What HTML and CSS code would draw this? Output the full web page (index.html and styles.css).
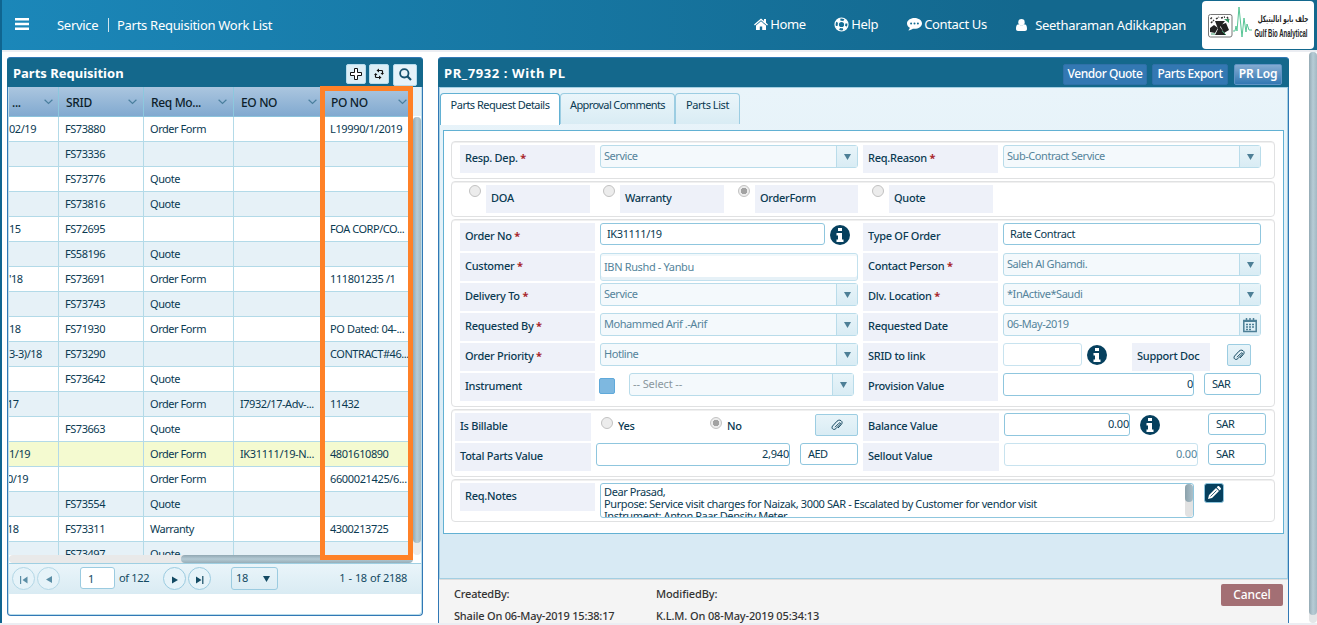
FILE: index.html
```
<!DOCTYPE html>
<html lang="en">
<head>
<meta charset="utf-8">
<title>Parts Requisition Work List</title>
<link rel="stylesheet" href="styles.css">
</head>
<body>
<svg class="defs" width="0" height="0">
  <symbol id="info" viewBox="0 0 20 20"><circle cx="10" cy="10" r="10" fill="#06405e"/><path d="M8 3h4v3H8zM6.500 8H12v6.500h1.500V17h-7v-2.500H8v-4H6.500z" fill="#fff"/></symbol>
  <symbol id="clip" viewBox="0 0 14 12"><path d="M5 8.200 9 4.200c1-1 2 .1 1.200 1L5.800 9.700C3.600 11.600.8 9.400 2.600 7L7 2.200C9.700-.5 13.700 2.500 11.400 5.400L8 9" fill="none" stroke="#0c3f57" stroke-width=".95"/></symbol>
  <symbol id="tri" viewBox="0 0 7 6"><path d="M0 0h7L3.500 6z" fill="currentColor"/></symbol>
  <symbol id="chev" viewBox="0 0 9 6"><path d="M.6.800 4.500 4.400 8.400.8" fill="none" stroke="#4a7f9e" stroke-width="1.200"/></symbol>
</svg>

<header class="topbar">
  <svg class="burger" viewBox="0 0 14 12"><path d="M0 0h14v2.600H0zM0 4.700h14v2.600H0zM0 9.400h14V12H0z" fill="#fff"/></svg>
  <nav class="crumbs"><span class="crumb-root">Service</span><span class="crumb-sep"></span><span>Parts Requisition Work List</span></nav>
  <nav class="links">
    <a class="l-home"><svg width="14" height="12" viewBox="0 0 14 12"><path d="M7 .5 0 6.500l.9.900L7 2.300l6.100 5.100.9-.9-2-1.700V1h-2v2z" fill="#fff"/><path d="M7 3.300 2 7.500V12h3.800V8.500h2.400V12H12V7.500z" fill="#fff"/></svg>Home</a>
    <a class="l-help"><svg width="15" height="15" viewBox="0 0 15 15"><circle cx="7.500" cy="7.500" r="6.500" fill="none" stroke="#fff" stroke-width="1.200"/><circle cx="7.500" cy="7.500" r="3.200" fill="none" stroke="#fff" stroke-width="1.200"/><circle cx="7.500" cy="7.500" r="4.800" fill="none" stroke="#fff" stroke-width="3" stroke-dasharray="4 3.540" stroke-dashoffset="-1.800"/></svg>Help</a>
    <a class="l-contact"><svg width="15" height="13" viewBox="0 0 15 13"><path d="M7.500 0C3.400 0 0 2.400 0 5.500c0 1.800 1.100 3.300 2.800 4.300-.2 1.200-.9 2-1.400 2.600 1.900-.1 3.500-.9 4.500-1.700l1.600.1c4.100 0 7.500-2.400 7.500-5.400S11.600 0 7.500 0zM4.100 6.500a1 1 0 1 1 0-2 1 1 0 0 1 0 2zm3.400 0a1 1 0 1 1 0-2 1 1 0 0 1 0 2zm3.400 0a1 1 0 1 1 0-2 1 1 0 0 1 0 2z" fill="#fff"/></svg>Contact Us</a>
    <a class="l-user"><svg width="11" height="12" viewBox="0 0 11 12"><circle cx="5.500" cy="3.200" r="3.200" fill="#fff"/><path d="M2.300 5.200C.5 5.500 0 7.500 0 10c0 1.300.8 2 2 2h7c1.200 0 2-.7 2-2 0-2.500-.5-4.500-2.300-4.800-1.600 1.500-4.800 1.500-6.400 0z" fill="#fff"/></svg>Seetharaman Adikkappan</a>
  </nav>
  <div class="logo">
    <svg class="logo-art" viewBox="0 0 50 36"><rect x="6.500" y="9.500" width="23.500" height="22.500" rx="2" fill="#fff" stroke="#777"/><path d="M13 16h10l-5 6 6 8H13l3-6z" fill="#222"/><path d="M8 23l4-3 4 3-3 5-5-1zM18 20l6-2 3 7-5 3z" fill="#222"/><path d="M9 18l3-3M14 14l3-2M19 13l4-1M8.500 14l2-2M25 12l2 3" stroke="#333" stroke-width="1.500" stroke-dasharray="2 1" fill="none"/><path d="M22 14h5v4z" fill="#3c9a68"/><path d="M9 29h4M20 26l4 4" stroke="#3c9a68"/><path d="M31 26h2l1-5 1 5 2-24 3 30 2-19 2 14 1-8 2 6h4" fill="none" stroke="#57c595" stroke-width="1"/></svg>
    <div class="logo-text"><span class="ar" dir="rtl">جلف بايو اناليتيكل</span><span class="en">Gulf Bio Analytical</span></div>
  </div>
</header>

<main class="main">
  <section class="list">
    <div class="bar">
      <h2>Parts Requisition</h2>
      <div class="tools">
        <button class="sq"><svg width="12" height="12" viewBox="0 0 12 12"><path d="M4.500.5h3v4h4v3h-4v4h-3v-4h-4v-3h4z" fill="#fff" stroke="#111"/></svg></button>
        <button class="sq"><svg width="10" height="12" viewBox="0 0 10 12"><path d="M8.500 5.500V3.300C8.500 2.700 8 2.500 7.500 2.500H4M1.500 6.500v2.200c0 .6.500.8 1 .8H6" fill="none" stroke="#111" stroke-width="1.200"/><path d="M5 .5v4L2.500 2.500zM5 7.500v4l2.500-2z" fill="#111"/><path d="M6.500 5h3.500L8.300 7zM0 7h3.500L1.700 5z" fill="#111"/></svg></button>
        <button class="sq big"><svg width="13" height="13" viewBox="0 0 13 13"><circle cx="5.300" cy="5.300" r="4.200" fill="none" stroke="#14506e" stroke-width="1.800"/><path d="M8.300 8.300 12 12" stroke="#14506e" stroke-width="2.200"/></svg></button>
      </div>
    </div>
    <div class="grid">
      <div class="scroller">
        <table>
          <colgroup><col class="c1"><col class="c2"><col class="c3"><col class="c4"><col class="c5"></colgroup>
          <thead><tr>
            <th><span>...</span><svg><use href="#chev"/></svg></th>
            <th><span>SRID</span><svg><use href="#chev"/></svg></th>
            <th><span>Req Mo...</span><svg><use href="#chev"/></svg></th>
            <th><span>EO NO</span><svg><use href="#chev"/></svg></th>
            <th><span>PO NO</span><svg><use href="#chev"/></svg></th>
          </tr></thead>
          <tbody>
            <tr><td>02/19</td><td>FS73880</td><td>Order Form</td><td></td><td class="wide">L19990/1/2019</td></tr>
            <tr><td></td><td>FS73336</td><td></td><td></td><td></td></tr>
            <tr><td></td><td>FS73776</td><td>Quote</td><td></td><td></td></tr>
            <tr><td></td><td>FS73816</td><td>Quote</td><td></td><td></td></tr>
            <tr><td>15</td><td>FS72695</td><td></td><td></td><td>FOA CORP/CO...</td></tr>
            <tr><td></td><td>FS58196</td><td>Quote</td><td></td><td></td></tr>
            <tr><td>'18</td><td>FS73691</td><td>Order Form</td><td></td><td class="wide">111801235 /1</td></tr>
            <tr><td></td><td>FS73743</td><td>Quote</td><td></td><td></td></tr>
            <tr><td>18</td><td>FS71930</td><td>Order Form</td><td></td><td class="wide">PO Dated: 04-...</td></tr>
            <tr><td>3-3)/18</td><td>FS73290</td><td></td><td></td><td>CONTRACT#46...</td></tr>
            <tr><td></td><td>FS73642</td><td>Quote</td><td></td><td></td></tr>
            <tr><td class="cut">17</td><td></td><td>Order Form</td><td>I7932/17-Adv-...</td><td>11432</td></tr>
            <tr><td></td><td>FS73663</td><td>Quote</td><td></td><td></td></tr>
            <tr class="selected"><td>1/19</td><td></td><td>Order Form</td><td class="wide">IK31111/19-N...</td><td>4801610890</td></tr>
            <tr><td class="cut">0/19</td><td></td><td>Order Form</td><td></td><td class="wide">6600021425/6...</td></tr>
            <tr><td></td><td>FS73554</td><td>Quote</td><td></td><td></td></tr>
            <tr><td class="cut">18</td><td>FS73311</td><td>Warranty</td><td></td><td>4300213725</td></tr>
            <tr><td></td><td>FS73497</td><td>Quote</td><td></td><td></td></tr>
          </tbody>
        </table>
      </div>
      <div class="vtrack"><div class="vthumb"></div></div>
    </div>
    <div class="htrack"><div class="hthumb"></div></div>
    <div class="pager">
      <button class="round dim"><svg width="8" height="8" viewBox="0 0 8 8"><path d="M0 0h1.200v8H0zM7.500.5v7L2.500 4z" fill="currentColor"/></svg></button>
      <button class="round dim"><svg width="6" height="7" viewBox="0 0 6 7"><path d="M6 0v7L0 3.500z" fill="currentColor"/></svg></button>
      <div class="page-no">1</div>
      <span class="of">of 122</span>
      <button class="round"><svg width="6" height="8" viewBox="0 0 6 8"><path d="M0 .5v7L6 4z" fill="currentColor"/></svg></button>
      <button class="round"><svg width="8" height="8" viewBox="0 0 8 8"><path d="M0 .5v7L5.500 4zM6.200 0h1.200v8H6.200z" fill="currentColor"/></svg></button>
      <div class="size">18<svg><use href="#tri"/></svg></div>
      <span class="range">1 - 18 of 2188</span>
    </div>
    <div class="highlight"></div>
  </section>

  <section class="detail">
    <div class="bar">
      <h2 class="pr">PR_7932 : With PL</h2>
      <div class="actions"><button class="w84">Vendor Quote</button><button class="w76">Parts Export</button><button class="w48 log">PR Log</button></div>
    </div>
    <div class="pane">
      <div class="tabs"><div class="tab t1 active">Parts Request Details</div><div class="tab t2">Approval Comments</div><div class="tab t3">Parts List</div></div>
      <div class="form">
        <div class="group g1">
          <label>Resp. Dep. <i>*</i></label><div class="combo">Service<b><svg><use href="#tri"/></svg></b></div>
          <label>Req.Reason <i>*</i></label><div class="combo">Sub-Contract Service<b><svg><use href="#tri"/></svg></b></div>
        </div>
        <div class="group g2">
          <span class="radio"></span><label>DOA</label>
          <span class="radio"></span><label>Warranty</label>
          <span class="radio on"></span><label class="short">OrderForm</label>
          <span class="radio"></span><label>Quote</label>
        </div>
        <div class="group g3">
          <label>Order No <i>*</i></label><div class="ctl"><div class="input w225">IK31111/19</div><svg class="info"><use href="#info"/></svg></div>
          <label>Type OF Order</label><div class="ctl"><div class="input full">Rate Contract</div></div>
          <label>Customer <i>*</i></label><div class="customer">IBN Rushd - Yanbu</div>
          <label>Contact Person <i>*</i></label><div class="combo">Saleh Al Ghamdi.<b><svg><use href="#tri"/></svg></b></div>
          <label>Delivery To <i>*</i></label><div class="combo">Service<b><svg><use href="#tri"/></svg></b></div>
          <label>Dlv. Location <i>*</i></label><div class="combo">*InActive*Saudi<b><svg><use href="#tri"/></svg></b></div>
          <label>Requested By <i>*</i></label><div class="combo">Mohammed Arif .-Arif<b><svg><use href="#tri"/></svg></b></div>
          <label>Requested Date</label><div class="combo">06-May-2019<b><svg class="cal" viewBox="0 0 14 15"><path d="M.8 2.500h12.400v11H.8z" fill="none" stroke="#4d7f96" stroke-width="1.500"/><path d="M.5 2h13v2H.5z" fill="#4d7f96"/><path d="M3.500 0v3M7 0v3M10.500 0v3" stroke="#4d7f96" stroke-width="1.500"/><path d="M3 6.500h8.500M3 9h8.500M3 11.500h5.500" stroke="#4d7f96" stroke-width="1.500" stroke-dasharray="2 1"/></svg></b></div>
          <label>Order Priority <i>*</i></label><div class="combo">Hotline<b><svg><use href="#tri"/></svg></b></div>
          <label>SRID to link</label><div class="ctl"><div class="input w79 off"></div><svg class="info"><use href="#info"/></svg><label class="doc">Support Doc</label><button class="clip w24"><svg><use href="#clip"/></svg></button></div>
          <label>Instrument</label><div class="ctl"><span class="check"></span><div class="combo w225 hint">-- Select --<b><svg><use href="#tri"/></svg></b></div></div>
          <label>Provision Value</label><div class="ctl"><div class="input num w191">0</div><div class="input cur w57">SAR</div></div>
        </div>
        <div class="group g4">
          <label>Is Billable</label><div class="ctl"><span class="radio"></span><span class="opt yes">Yes</span><span class="radio on"></span><span class="opt no">No</span><button class="clip w43"><svg><use href="#clip"/></svg></button></div>
          <label>Balance Value</label><div class="ctl"><div class="input num w126">0.00</div><svg class="info"><use href="#info"/></svg><div class="input cur w58">SAR</div></div>
          <label>Total Parts Value</label><div class="ctl"><div class="input num w194">2,940</div><div class="input cur w58">AED</div></div>
          <label>Sellout Value</label><div class="ctl"><div class="input num w194 off">0.00</div><div class="input cur w58">SAR</div></div>
        </div>
        <div class="group g5">
          <label>Req.Notes</label>
          <div class="notes"><div class="notes-text">Dear Prasad,<br>Purpose: Service visit charges for Naizak, 3000 SAR - Escalated by Customer for vendor visit<br>Instrument: Anton Paar Density Meter</div><div class="notes-track"><div class="notes-thumb"></div></div></div>
          <button class="edit"><svg width="14" height="14" viewBox="0 0 14 14"><path d="M1 13l1-4 7-7 3 3-7 7zM9.700 1.300l1-1c.5-.4 1-.3 1.400 0L13.700 2c.4.500.4 1 0 1.400l-1 1z" fill="#fff"/><path d="M3.500 10.500 9.500 4.500" stroke="#06405e" stroke-width=".8"/></svg></button>
        </div>
      </div>
    </div>
    <footer class="foot">
      <div class="who a"><span>CreatedBy:</span><span>Shaile On 06-May-2019 15:38:17</span></div>
      <div class="who b"><span>ModifiedBy:</span><span>K.L.M. On 08-May-2019 05:34:13</span></div>
      <button class="cancel">Cancel</button>
    </footer>
  </section>
  <div class="pagetrack"><div class="pagethumb"></div></div>
</main>
</body>
</html>
```
FILE: styles.css
```
* { box-sizing: border-box; }
body { margin: 0; width: 1317px; height: 625px; overflow: hidden; background: #fff; border-bottom: 2px solid #eceef3; font: 11px/14px "Noto Sans", sans-serif; letter-spacing: -.45px; color: #0a3a52; position: relative; }
body::before { content: ""; position: absolute; left: 0; top: 0; width: 2px; height: 625px; background: #0f6590; }
.defs { position: absolute; }
button { font: inherit; letter-spacing: inherit; color: inherit; padding: 0; margin: 0; border: 0; display: flex; align-items: center; justify-content: center; }
h2 { margin: 0; font-size: 13px; font-weight: 700; color: #fff; letter-spacing: 0; line-height: 18px; margin-top: -2px; }
h2.pr { letter-spacing: .6px; }

.topbar { height: 52px; margin-left: 2px; display: flex; align-items: center; background: linear-gradient(90deg, #1b87b9, #13688e 78%); border-bottom: 2px solid #ebedf2; color: #fff; font-size: 13px; letter-spacing: -.29px; }
.burger { width: 14px; height: 12px; margin: 0 0 2px 13px; }
.crumbs { display: flex; margin-left: 28px; line-height: 18px; }
.crumb-root { width: 51px; }
.crumb-sep { width: 1px; height: 14px; background: #cfe4ee; margin: 2px 8px 0 0; }
.links { display: flex; flex: 1; align-items: center; height: 18px; margin-top: -2px; }
.links a { display: flex; align-items: center; gap: 3px; white-space: nowrap; }
.l-home { margin-left: 482px; width: 80px; }
.links .l-home, .links .l-help, .links .l-contact { gap: 2px; letter-spacing: -.35px; }
.l-home svg, .l-help svg, .l-contact svg { flex: none; }
.l-help { width: 73px; }
.l-contact { width: 109px; }
.links .l-user { gap: 8px; padding-top: 2px; }
.logo { width: 112px; height: 48px; margin-right: 3px; background: #fff; border-radius: 4px; display: flex; align-items: center; }
.logo-art { width: 50px; height: 36px; margin-top: -4px; flex: none; }
.logo-text { display: flex; flex-direction: column; color: #222; align-items: flex-end; width: 56px; white-space: nowrap; padding-top: 2px; }
.ar { font: bold 9px/15px "DejaVu Sans", sans-serif; letter-spacing: 0; transform: scaleX(.63); transform-origin: right; }
.en { font: bold 10px/14px "Liberation Sans", sans-serif; letter-spacing: 0; transform: scaleX(.6); transform-origin: right; }

.main { display: flex; height: 571px; }
.bar { height: 30px; background: #14688c; display: flex; align-items: center; justify-content: space-between; }
.list { position: relative; width: 416px; height: 559px; margin: 5px 0 0 7px; border: 1px solid #3178b5; border-top: 0; border-radius: 4px; flex: none; box-shadow: inset -1px -1px #b9dcea, inset 1px 0 #b9dcea; }
.list .bar { margin: 0 -1px; border-radius: 4px 4px 0 0; border-top: 1px solid #3178b5; padding: 3px 6px 0 6px; }
.tools { display: flex; gap: 3px; align-items: center; }
.sq { width: 20px; height: 20px; background: #dceef6; border: 1px solid #b6dced; border-radius: 2px; }
.sq.big { width: 24px; height: 22px; margin-left: 1px; margin-top: 1px; background: #e6f2f9; }
.grid { display: flex; height: 468px; margin: 0 1px; background: linear-gradient(#e4f1f8 29px, #fff 29px); }
.scroller { width: 404px; height: 468px; overflow: hidden; flex: none; }
table { width: 404px; table-layout: fixed; border-collapse: separate; border-spacing: 0; }
.c1 { width: 50px; } .c2 { width: 85px; } .c3 { width: 90px; } .c4 { width: 90px; } .c5 { width: 89px; }
th { height: 30px; padding: 3px 0 0 7px; text-align: left; font-size: 12px; font-weight: 500; color: #0d1e2b; letter-spacing: -.35px; background: linear-gradient(#abc6df, #81a9d0); border-right: 1px solid #8cc8de; border-bottom: 1px solid #8cc3dc; white-space: nowrap; overflow: hidden; }
th:first-child { padding-left: 3px; }
th span { display: inline-block; width: 67px; vertical-align: middle; }
th:first-child span { width: 32px; }
th:nth-child(2) span { width: 62px; }
th svg { width: 9px; height: 6px; vertical-align: middle; margin-bottom: 2px; }
td { height: 25px; padding: 0 0 0 6px; border-right: 1px solid #b3dae8; border-bottom: 1px solid #b3dae8; white-space: nowrap; background: #fff; }
td:first-child { padding-left: 0; overflow: hidden; }
td.cut { text-indent: -2px; }
tr:nth-child(even) td { background: #e6f1f7; }
tr.selected td, tr.selected:nth-child(even) td { background: #f4fad0; }
td.wide { letter-spacing: -.36px; }
.vtrack { width: 8px; margin-top: 30px; height: 438px; border-radius: 4px; background: #ececec; }
.vthumb { height: 426px; border-radius: 4px; background: linear-gradient(90deg, #94aab4, #b7ccd6 50%, #a3b9c3); }
.htrack { height: 8px; margin: 0 10px 0 1px; border-radius: 4px; background: #e9e9e9; padding-left: 172px; }
.hthumb { height: 8px; width: 232px; border-radius: 4px; background: linear-gradient(#91a8b3, #b4cad4 50%, #98aeb8); }
.pager { height: 31px; margin: 0 1px; border-top: 1px solid #9fcfe2; background: linear-gradient(#eaf5fa, #d9ebf3); display: flex; align-items: center; color: #134a63; letter-spacing: -.2px; }
.pager > * { position: relative; top: -1px; }
.round { width: 23px; height: 23px; border: 1px solid #9bcbe0; border-radius: 50%; margin-left: 2px; color: #134a63; background: #e6f3f9; padding-top: 3px; flex: none; }
.round:first-child { margin-left: 3px; }
.round.dim { color: #5b8ea6; border-color: #b3d7e6; }
.page-no { width: 35px; height: 22px; margin-left: 20px; background: #fff; border: 1px solid #9bcbe0; border-radius: 3px; padding: 4px 7px; }
.of { width: 42px; margin-left: 4px; margin-top: -1px; letter-spacing: -.35px; white-space: nowrap; }
.size { width: 47px; height: 23px; margin-left: 20px; border: 1px solid #9bcbe0; border-radius: 3px; padding: 0 7px 1px 4px; display: flex; align-items: center; justify-content: space-between; }
.size svg { width: 7px; height: 6px; margin-top: 3px; }
.range { margin: -1px 14px 0 auto; letter-spacing: -.3px; word-spacing: .6px; }
.highlight { position: absolute; left: 312px; top: 29px; width: 93px; height: 474px; border: 5px solid #ff8127; }

.detail { width: 851px; height: 566px; margin: 5px 0 0 15px; border: 1px solid #3178b5; border-bottom: 0; border-top: 0; border-radius: 4px 4px 0 0; flex: none; }
.detail .bar { margin: 0 -1px; border-radius: 4px 4px 0 0; border-top: 1px solid #3178b5; padding: 3px 7px 0 6px; }
.actions { display: flex; gap: 5px; }
.actions button { height: 21px; background: #3378b3; border: 1px solid #2f70a8; border-radius: 2px; color: #fff; font-size: 12px; font-weight: 500; letter-spacing: -.45px; white-space: nowrap; }
.w84 { width: 84px; } .w76 { width: 76px; } .w48 { width: 48px; }
.actions .log { background: linear-gradient(#84abd1, #3378b3); margin-left: 1px; border-color: #5f93c4; font-weight: 600; letter-spacing: -.2px; }
.pane { height: 492px; padding: 5px 3px 0 4px; background: linear-gradient(#e9f4fa, #d8eaf4 90%); border: 1px solid #a3cfe2; }
.tabs { display: flex; height: 37px; margin-left: -4px; }
.tab { height: 31px; border: 1px solid #9ccde2; border-bottom: 0; border-radius: 4px 4px 0 0; background: linear-gradient(#eaf5fa, #d9ecf4); padding-top: 4px; text-align: center; white-space: nowrap; }
.tab.active { background: #fff; border-color: #62b1d3; height: 32px; letter-spacing: -.52px; }
.t1 { width: 120px; } .t2 { width: 115px; letter-spacing: -.65px; } .t3 { width: 65px; }
.t2 { letter-spacing: -.6px; }
.form { width: 841px; height: 404px; margin-left: -1px; background: #fff; border: 1px solid #62b1d3; padding: 10px 8px 0 7px; display: flex; flex-direction: column; gap: 2px; }
.group { border: 1px solid #e0e1e2; border-radius: 4px; padding: 3px 0 0 8px; display: grid; grid-template-columns: 135px 258px 135px 258px; column-gap: 5px; grid-auto-rows: 30px; align-content: start; box-shadow: inset 0 1px #f0f0f0; }
label { height: 28px; background: #eef1f9; padding: 6px 0 0 5px; font-weight: 500; letter-spacing: -.28px; white-space: nowrap; color: #0a3a52; }
label i { color: #a8262c; font-style: normal; font-weight: 700; }
.g1 { height: 38px; } .g2 { height: 36px; } .g3 { height: 188px; } .g4 { height: 68px; } .g5 { height: 43px; }
.group.g2 { display: flex; column-gap: 0; padding-left: 17px; }
.g2 label { margin-left: 5px; width: 104px; }
.g2 label.short { width: 103px; }
.g2 label + .radio { margin-left: 13px; }
.g2 .radio.on, .g2 .radio:last-of-type { margin-left: 14px; }
.group.g4 { padding-left: 3px; grid-template-columns: 136px 262px 136px 262px; }
.g4 label:nth-of-type(odd) { padding-left: 5px; }
.group.g5 { display: flex; column-gap: 0; }
.g5 label { width: 135px; flex: none; }
.radio { width: 12px; height: 12px; flex: none; border: 1px solid #c2c2c2; border-radius: 50%; background: #ececec; }
.radio.on { background: radial-gradient(#a2a2a2 0 3px, #ececec 3.500px); }
.combo { height: 23px; border: 1px solid #b9dcea; border-radius: 3px; background: #f4f9fc; color: #54849b; padding: 3px 0 0 3px; display: flex; justify-content: space-between; white-space: nowrap; }
.combo.hint { color: #8a979e; letter-spacing: -.1px; }
.combo b { width: 21px; margin-top: -3px; height: 21px; border-left: 1px solid #b9dcea; background: linear-gradient(#e8f4f9, #d9ecf4); display: flex; align-items: center; justify-content: center; color: #4d7f96; padding-top: 1px; }
.combo b svg { width: 7px; height: 6px; }
.combo b svg.cal { width: 14px; height: 15px; }
.customer { height: 28px; border: 1px solid #c3e1ee; border-radius: 3px; padding: 6px 3px 0; color: #54849b; background: #fff; box-shadow: inset 0 -3px #e6f1f7, inset 0 2px #f1f8fb; letter-spacing: -.36px; }
.ctl { display: flex; align-items: flex-start; height: 28px; white-space: nowrap; }
.input { height: 22px; border: 1px solid #8fc6de; border-radius: 3px; background: #fff; padding: 3px 6px 0; flex: none; letter-spacing: -.4px; }
.full { width: 258px; } .w225 { width: 225px; } .w79 { width: 79px; } .w191 { width: 191px; } .w57 { width: 57px; } .w126 { width: 126px; } .w58 { width: 58px; } .w194 { width: 194px; } .w24 { width: 24px; } .w43 { width: 43px; }
.input.num { text-align: right; padding-right: 0; height: 23px; letter-spacing: -.2px; }
.input.off { height: 23px; border-color: #c8e3ef; color: #54849b; }
.ctl .cur { margin-left: 10px; padding-left: 7px; letter-spacing: -.55px; }
.info { width: 20px; height: 20px; margin: 2px 0 0 5px; flex: none; }
label.doc { width: 78px; margin-left: 25px; letter-spacing: -.25px; }
.clip { height: 22px; background: linear-gradient(#e8f4f9, #d9ecf4); border: 1px solid #9ccde2; border-radius: 2px; margin: 1px 0 0 17px; flex: none; }
.clip svg { width: 14px; height: 12px; }
.check { width: 16px; height: 16px; margin: 5px 14px 0 -1px; border: 1px solid #5fa9da; border-radius: 2px; background: #7eb8e0; }
.g4 .radio { margin: 4px 5px 0; }
.g4 .info { margin-left: 10px; } .g4 .info + .cur { margin-left: 48px; }
.opt { font-weight: 500; letter-spacing: -.3px; margin-top: 6px; }
.yes { width: 87px; } .no { width: 71px; }
.notes { width: 594px; height: 35px; margin-left: 5px; border: 1px solid #8fc6de; border-radius: 3px; display: flex; overflow: hidden; flex: none; }
.notes-text { flex: 1; padding: 2px 3px; line-height: 12px; letter-spacing: -.39px; height: 33px; }
.notes-track { width: 8px; background: #e2e2e2; border-radius: 4px; }
.notes-thumb { height: 18px; border-radius: 4px; background: linear-gradient(90deg, #8ba1ab, #abc0ca); }
.edit { width: 20px; height: 20px; margin-left: 10px; background: #06405e; border: 1px solid #8fc6de; border-radius: 3px; }
.foot { height: 44px; background: #f4f4f4; border-top: 1px solid #ddd; display: flex; color: #333; font-weight: 500; letter-spacing: -.2px; padding: 7px 5px 0 15px; }
.who { display: flex; flex-direction: column; gap: 8px; width: 202px; white-space: nowrap; }
.who.b { letter-spacing: -.12px; }
.cancel { width: 62px; height: 22px; margin: -3px 0 0 auto; border-radius: 2px; background: #a36f74; color: #fff; font-size: 12px; letter-spacing: -.1px; }
.pagetrack { width: 8px; height: 571px; margin-left: 20px; background: #e4e6e8; border-radius: 4px; flex: none; }
.pagethumb { height: 563px; border-radius: 4px; background: linear-gradient(90deg, #94aab4, #b7ccd6 50%, #a3b9c3); }
```
